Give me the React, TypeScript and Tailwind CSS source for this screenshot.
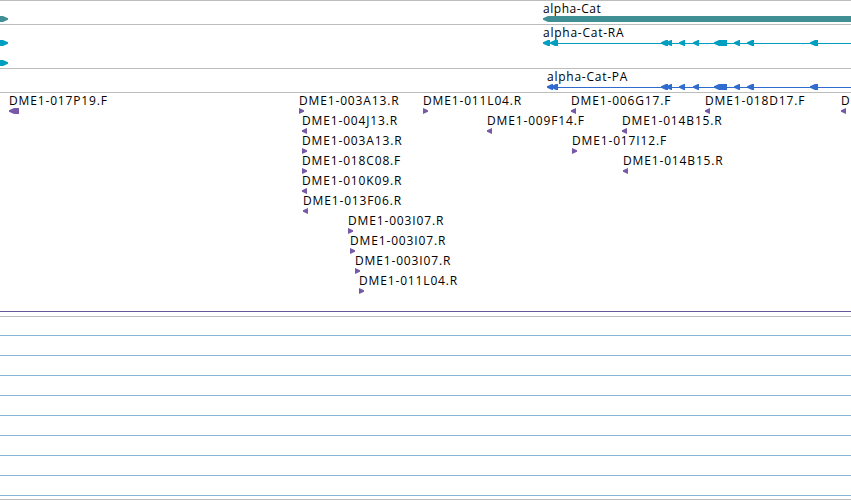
import clsx from "clsx";

type Direction = "left" | "right";

interface IFeature {
  start: number;
  width?: number;
  dir: Direction;
  name?: string;
}

interface IArrowProps {
  width: number;
  dir: Direction;
}

const GENE_EXONS: IFeature[] = [
  { start: 661, width: 7, dir: "left" },
  { start: 666, width: 6, dir: "left" },
  { start: 679, width: 6, dir: "left" },
  { start: 693, width: 6, dir: "left" },
  { start: 714, width: 13, dir: "left" },
  { start: 734, width: 6, dir: "left" },
  { start: 747, width: 7, dir: "left" },
  { start: 810, width: 8, dir: "left" },
];

const RA_EXONS: IFeature[] = [
  { start: 543, width: 7, dir: "left" },
  { start: 550, width: 8, dir: "left" },
  ...GENE_EXONS,
];

const PA_EXONS: IFeature[] = [
  { start: 547, width: 6, dir: "left" },
  { start: 551, width: 7, dir: "left" },
  ...GENE_EXONS,
];

const BAC_ROWS: IFeature[][] = [
  [
    { start: 9, width: 10, dir: "left", name: "DME1-017P19.F" },
    { start: 299, dir: "right", name: "DME1-003A13.R" },
    { start: 423, dir: "right", name: "DME1-011L04.R" },
    { start: 571, dir: "left", name: "DME1-006G17.F" },
    { start: 705, dir: "left", name: "DME1-018D17.F" },
    { start: 841, dir: "left", name: "D" },
  ],
  [
    { start: 302, dir: "left", name: "DME1-004J13.R" },
    { start: 487, dir: "left", name: "DME1-009F14.F" },
    { start: 622, dir: "left", name: "DME1-014B15.R" },
  ],
  [
    { start: 302, dir: "right", name: "DME1-003A13.R" },
    { start: 572, dir: "right", name: "DME1-017I12.F" },
  ],
  [
    { start: 302, dir: "right", name: "DME1-018C08.F" },
    { start: 623, dir: "left", name: "DME1-014B15.R" },
  ],
  [{ start: 302, dir: "left", name: "DME1-010K09.R" }],
  [{ start: 303, dir: "left", name: "DME1-013F06.R" }],
  [{ start: 348, dir: "right", name: "DME1-003I07.R" }],
  [{ start: 350, dir: "right", name: "DME1-003I07.R" }],
  [{ start: 355, dir: "right", name: "DME1-003I07.R" }],
  [{ start: 359, dir: "right", name: "DME1-011L04.R" }],
];

const Arrow = ({ width, dir }: IArrowProps) => {
  const head = Math.min(width, 5);
  return (
    <svg
      width={width}
      height={6}
      className={clsx("block fill-current", dir === "right" && "-scale-x-100")}
    >
      <path d={`M0 2.3L${head} 0H${width}V6H${head}L0 3.7Z`} />
    </svg>
  );
};

const Label = ({ name }: { name: string }) => (
  <span className="block h-4 leading-[18px] text-black whitespace-nowrap">
    {name}
  </span>
);

const Transcript = ({ exons }: { exons: IFeature[] }) => (
  <div className="relative h-1.5">
    <div
      className="absolute right-0 h-px bg-current top-[3px]"
      style={{ left: exons[0].start + 3 }}
    />
    {exons.map((exon) => (
      <div key={exon.start} className="absolute top-0" style={{ left: exon.start }}>
        <Arrow width={exon.width ?? 6} dir={exon.dir} />
      </div>
    ))}
  </div>
);

const App = () => {
  return (
    <div className="flex flex-col w-full h-[500px] overflow-hidden bg-white font-['Open_Sans',sans-serif] text-[12px] tracking-[0.85px]">
      {/* Gene */}
      <section className="h-6 border-t border-[#bdbdbd] text-[#3f8f94]">
        <div className="pl-[543px] -mt-px tracking-[0.55px]">
          <Label name="alpha-Cat" />
        </div>
        <div className="flex justify-between h-1.5">
          <Arrow width={8} dir="right" />
          <Arrow width={308} dir="left" />
        </div>
      </section>
      {/* mRNA */}
      <section className="border-t h-11 border-[#bdbdbd] text-[#009fc0]">
        <div className="pl-[543px] -mt-px tracking-[0.75px]">
          <Label name="alpha-Cat-RA" />
        </div>
        <div className="relative">
          <Transcript exons={RA_EXONS} />
          <div className="absolute top-0 left-0">
            <Arrow width={8} dir="right" />
          </div>
        </div>
        <div className="mt-3.5">
          <Arrow width={8} dir="right" />
        </div>
      </section>
      {/* Protein */}
      <section className="h-6 border-t border-[#bdbdbd] text-[#306bcf]">
        <div className="pl-[547px] -mt-px tracking-[0.75px]">
          <Label name="alpha-Cat-PA" />
        </div>
        <Transcript exons={PA_EXONS} />
      </section>
      {/* BAC ends */}
      <section className="border-t h-[219px] border-[#bdbdbd] text-[#7659a7]">
        <div className="-mt-px">
          {BAC_ROWS.map((row, i) => (
            <div key={i} className="relative h-5">
              {row.map((feature) => (
                <div
                  key={feature.start}
                  className="absolute top-0"
                  style={{ left: feature.start }}
                >
                  <Label name={feature.name ?? ""} />
                  <Arrow width={feature.width ?? 5} dir={feature.dir} />
                </div>
              ))}
            </div>
          ))}
        </div>
      </section>
      <div className="h-[5px] border-t border-[#66559b]" />
      {/* Empty rows */}
      <section className="border-t h-[183px] border-[#bdbdbd]">
        {Array.from({ length: 9 }, (_, i) => (
          <div
            key={i}
            className={clsx("border-b border-[#8ab5d5]", i === 0 ? "h-[19px]" : "h-5")}
          />
        ))}
      </section>
      <div className="h-px bg-[#bdbdbd]" />
    </div>
  );
};

export default App;
